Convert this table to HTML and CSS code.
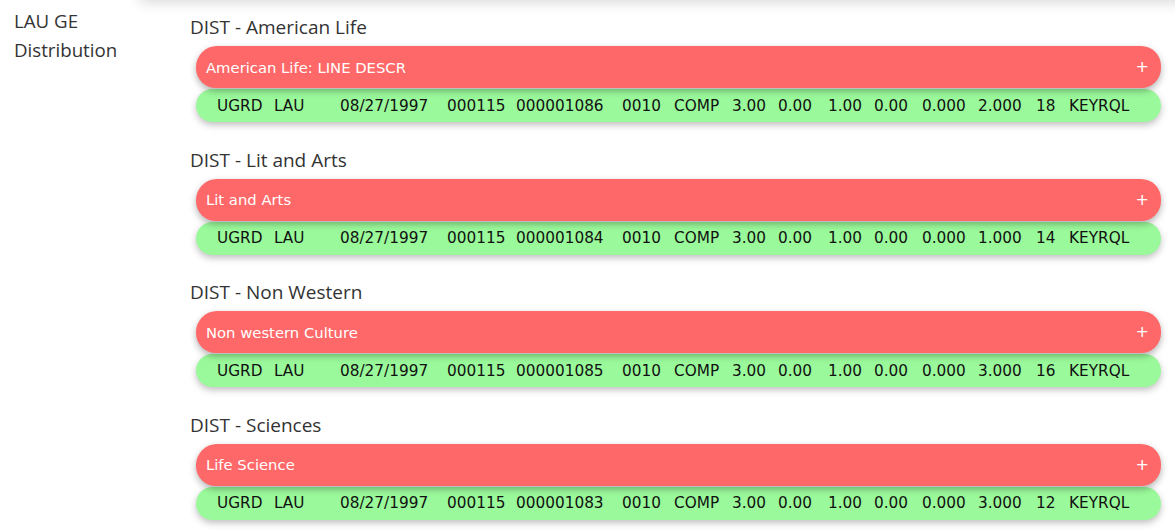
FILE: index.html
```html
<!DOCTYPE html>
<html>
<head>
<meta charset="utf-8">
<link rel="stylesheet" href="styles.css">
</head>
<body>
<div class="page">
  <div class="label">LAU GE<br>Distribution</div>
  <div class="content">
    <div class="prev-card"></div>

    <section class="group">
      <h3 class="group-title">DIST - American Life</h3>
      <div class="card">
        <div class="card-head"><span>American Life: LINE DESCR</span><span class="plus">+</span></div>
        <div class="card-row">
          <span>UGRD</span><span>LAU</span><span>08/27/1997</span><span>000115</span><span>000001086</span><span>0010</span><span>COMP</span><span>3.00</span><span>0.00</span><span>1.00</span><span>0.00</span><span>0.000</span><span>2.000</span><span>18</span><span>KEYRQL</span>
        </div>
      </div>
    </section>

    <section class="group">
      <h3 class="group-title">DIST - Lit and Arts</h3>
      <div class="card">
        <div class="card-head"><span>Lit and Arts</span><span class="plus">+</span></div>
        <div class="card-row">
          <span>UGRD</span><span>LAU</span><span>08/27/1997</span><span>000115</span><span>000001084</span><span>0010</span><span>COMP</span><span>3.00</span><span>0.00</span><span>1.00</span><span>0.00</span><span>0.000</span><span>1.000</span><span>14</span><span>KEYRQL</span>
        </div>
      </div>
    </section>

    <section class="group">
      <h3 class="group-title">DIST - Non Western</h3>
      <div class="card">
        <div class="card-head"><span>Non western Culture</span><span class="plus">+</span></div>
        <div class="card-row">
          <span>UGRD</span><span>LAU</span><span>08/27/1997</span><span>000115</span><span>000001085</span><span>0010</span><span>COMP</span><span>3.00</span><span>0.00</span><span>1.00</span><span>0.00</span><span>0.000</span><span>3.000</span><span>16</span><span>KEYRQL</span>
        </div>
      </div>
    </section>

    <section class="group">
      <h3 class="group-title">DIST - Sciences</h3>
      <div class="card">
        <div class="card-head"><span>Life Science</span><span class="plus">+</span></div>
        <div class="card-row">
          <span>UGRD</span><span>LAU</span><span>08/27/1997</span><span>000115</span><span>000001083</span><span>0010</span><span>COMP</span><span>3.00</span><span>0.00</span><span>1.00</span><span>0.00</span><span>0.000</span><span>3.000</span><span>12</span><span>KEYRQL</span>
        </div>
      </div>
    </section>
  </div>
</div>
</body>
</html>
```
FILE: styles.css
```css
html, body {
  margin: 0;
  padding: 0;
  background: #fff;
  overflow: hidden;
}
body {
  font-family: "Open Sans", "Noto Sans", sans-serif;
  color: #333;
}
.page {
  display: flex;
  align-items: flex-start;
  height: 530px;
}
.label {
  width: 190px;
  flex: none;
  box-sizing: border-box;
  padding: 6px 0 0 14px;
  font-size: 18.7px;
  line-height: 29px;
  color: #333;
}
.content {
  flex: 1;
  min-width: 0;
  position: relative;
  padding-right: 14px;
}
.prev-card {
  position: absolute;
  left: -50px;
  right: -40px;
  top: -30px;
  height: 30px;
  background: #fff;
  box-shadow: 0 2px 14px rgba(0, 0, 0, 0.16);
}
.group {
  padding-top: 14px;
  padding-bottom: 10.5px;
}
.group-title {
  margin: 0 0 6px 0;
  font-size: 19px;
  font-weight: normal;
  line-height: 26px;
  color: #333;
}
.card {
  margin-left: 6px;
  display: flex;
  flex-direction: column;
  font-family: "DejaVu Sans", Verdana, sans-serif;
}
.card-head {
  position: relative;
  z-index: 2;
  height: 42px;
  box-sizing: border-box;
  padding: 0 12px 0 10px;
  display: flex;
  align-items: center;
  justify-content: space-between;
  background: #ff6868;
  color: #fff;
  font-size: 14.8px;
  border-radius: 21px 20px 20px 20px;
  box-shadow: 0 3px 7px rgba(0, 0, 0, 0.3);
}
.plus {
  font-size: 16px;
  font-weight: normal;
  line-height: 1;
}
.card-row {
  position: relative;
  z-index: 1;
  margin-top: 1px;
  height: 33px;
  box-sizing: border-box;
  padding-left: 21px;
  display: grid;
  grid-template-columns: 57px 66px 107px 69px 106px 52px 58px 46px 50px 46px 48px 56px 58px 33px auto;
  align-items: center;
  background: #9af99a;
  color: #111;
  font-size: 15.3px;
  border-radius: 17px;
  box-shadow: 0 3px 7px rgba(0, 0, 0, 0.25);
}
```
